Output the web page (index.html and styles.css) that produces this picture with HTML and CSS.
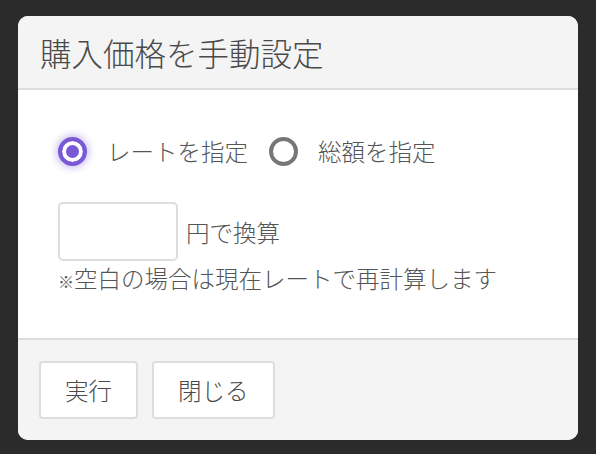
FILE: index.html
```html
<!DOCTYPE html>
<html lang="ja">
<head>
  <meta charset="UTF-8" />
  <meta name="viewport" content="width=device-width, initial-scale=1.0"/>
  <title>購入価格を手動設定</title>
  <link rel="stylesheet" href="styles.css">
</head>
<body>

<div class="dialog">
  <div class="dialog-header">
    <h1>購入価格を手動設定</h1>
  </div>

  <div class="dialog-body">
    <div class="radio-row">
      <label class="radio-item">
        <span class="radio checked"></span>
        <span>レートを指定</span>
      </label>
      <label class="radio-item">
        <span class="radio"></span>
        <span>総額を指定</span>
      </label>
    </div>

    <div class="amount-row">
      <input type="text" class="amount-input" />
      <span>円で換算</span>
    </div>
    <p class="note"><span class="mark">※</span>空白の場合は現在レートで再計算します</p>
  </div>

  <div class="dialog-footer">
    <button type="button">実行</button>
    <button type="button">閉じる</button>
  </div>
</div>

</body>
</html>
```

FILE: styles.css
```css
body {
  margin: 0;
  padding: 16px 18px;
  background: #2b2b2b;
  font-family: "Noto Sans CJK JP", "Noto Sans", sans-serif;
  font-weight: 300;
  color: #555;
}
.dialog {
  width: 560px;
  background: white;
  border-radius: 10px;
  overflow: hidden;
}
.dialog-header {
  background: #f4f4f4;
  padding: 12px 22px;
  border-bottom: 2px solid #dddddd;
}
h1 {
  margin: 0;
  font-size: 31.5px;
  font-weight: 300;
  line-height: 48px;
  color: #4a4a4a;
}
.dialog-body {
  padding: 44px 40px 43px;
  font-size: 23.5px;
}
.radio-row {
  display: flex;
  align-items: center;
  gap: 21px;
  height: 34px;
}
.radio-item {
  display: flex;
  align-items: center;
  gap: 20px;
  line-height: 34px;
}
.radio {
  width: 21px;
  height: 21px;
  border: 4px solid #777;
  border-radius: 50%;
  background: white;
}
.radio.checked {
  border-color: #7a59d7;
  background: #7a59d7;
  box-shadow: inset 0 0 0 4px white, 0 0 6px 3px rgba(122, 89, 215, 0.3);
}
.amount-row {
  display: flex;
  align-items: center;
  gap: 8px;
  margin-top: 34px;
}
.amount-input {
  box-sizing: border-box;
  width: 120px;
  height: 59px;
  border: 2px solid #dddddd;
  border-radius: 5px;
  font-size: 24px;
  padding: 0 8px;
  margin: 0;
}
.note {
  margin: 0;
  height: 34px;
  line-height: 34px;
}
.mark {
  font-size: 16px;
  font-weight: 400;
  line-height: 1;
}
.dialog-footer {
  background: #f4f4f4;
  border-top: 2px solid #dddddd;
  padding: 21px;
  display: flex;
  gap: 14px;
}
button {
  box-sizing: border-box;
  height: 58px;
  padding: 0 24px;
  background: white;
  color: #4a4a4a;
  border: 2px solid #dddddd;
  border-radius: 4px;
  font-family: inherit;
  font-weight: 300;
  font-size: 23.5px;
  cursor: pointer;
}
```
